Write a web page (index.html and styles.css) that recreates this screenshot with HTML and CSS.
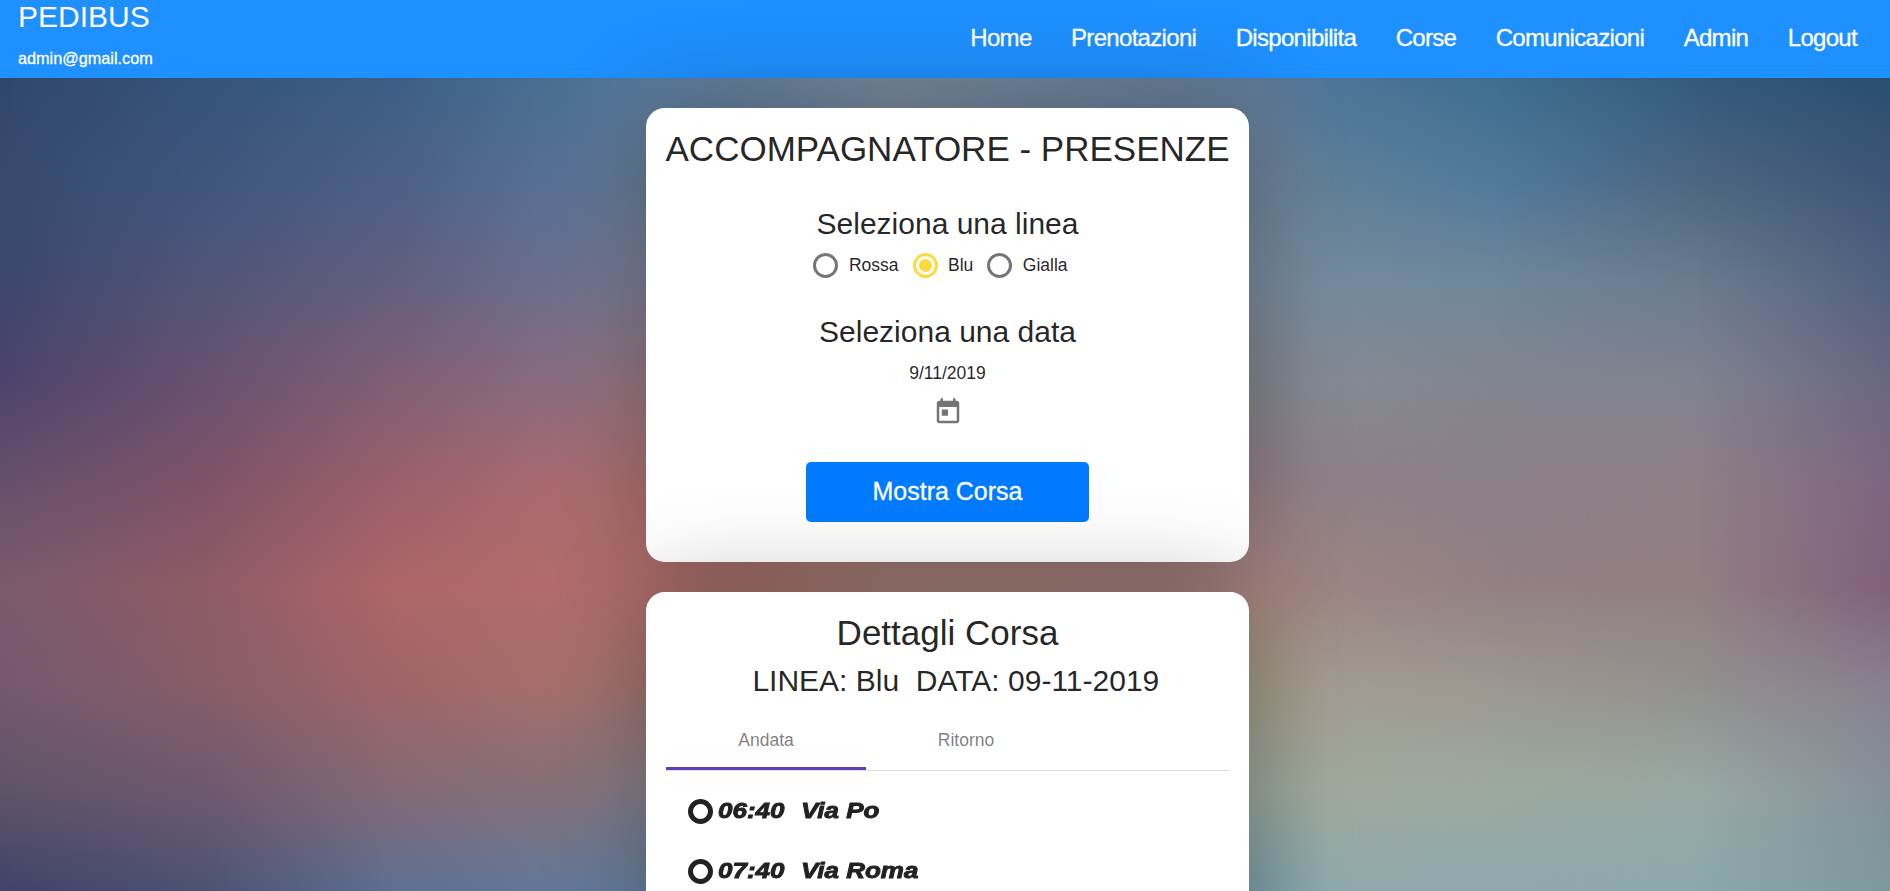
FILE: index.html
```html
<!DOCTYPE html>
<html lang="it">
<head>
<meta charset="utf-8">
<title>Pedibus</title>
<link rel="stylesheet" href="styles.css">
</head>
<body>
<div class="page">
  <div class="backdrop" aria-hidden="true">
    <div class="band b0"></div><div class="band b1"></div><div class="band b2"></div>
    <div class="band b3"></div><div class="band b4"></div><div class="band b5"></div>
    <div class="band b6"></div><div class="band b7"></div><div class="band b8"></div>
    <div class="band b9"></div><div class="band b10"></div>
  </div>
  <div class="app">
    <header class="topbar">
      <div class="brand">
        <div class="brand-name">PEDIBUS</div>
        <div class="brand-user">admin@gmail.com</div>
      </div>
      <nav class="menu">
        <a>Home</a><a>Prenotazioni</a><a>Disponibilita</a><a>Corse</a><a>Comunicazioni</a><a>Admin</a><a>Logout</a>
      </nav>
    </header>
    <main class="content">
      <section class="card picker">
        <h1 class="title">ACCOMPAGNATORE - PRESENZE</h1>
        <h2 class="subtitle">Seleziona una linea</h2>
        <div class="radios">
          <label class="radio"><span class="ring"></span>Rossa</label>
          <label class="radio"><span class="ring checked"></span>Blu</label>
          <label class="radio"><span class="ring"></span>Gialla</label>
        </div>
        <h2 class="subtitle date-title">Seleziona una data</h2>
        <div class="date">9/11/2019</div>
        <svg class="calendar" viewBox="0 0 24 24"><path d="M19 3h-1V1h-2v2H8V1H6v2H5c-1.11 0-1.99.9-1.99 2L3 19c0 1.1.89 2 2 2h14c1.1 0 2-.9 2-2V5c0-1.1-.9-2-2-2zm0 16H5V8h14v11zM7 10h5v5H7z"/></svg>
        <button class="submit">Mostra Corsa</button>
      </section>
      <section class="card details">
        <h1 class="title">Dettagli Corsa</h1>
        <h2 class="subtitle run-info">&nbsp;&nbsp;LINEA: Blu&nbsp; DATA: 09-11-2019</h2>
        <div class="tabs">
          <div class="tab active">Andata</div>
          <div class="tab">Ritorno</div>
        </div>
        <ul class="stops">
          <li class="stop"><span class="dot"></span><span class="time"><span class="wide">06:40</span></span><span class="wide">Via Po</span></li>
          <li class="stop"><span class="dot"></span><span class="time"><span class="wide">07:40</span></span><span class="wide">Via Roma</span></li>
        </ul>
      </section>
    </main>
  </div>
</div>
</body>
</html>
```
FILE: styles.css
```css
* { box-sizing: border-box; }
html, body { margin: 0; height: 100%; overflow: hidden; }
body {
  font-family: "Liberation Sans", Arial, sans-serif;
  font-size: 17.5px;
  color: rgba(0, 0, 0, .87);
}
h1, h2, ul { margin: 0; padding: 0; font-weight: 400; }

.page { display: grid; grid-template: 100vh / 100%; overflow: hidden; }
.backdrop, .app { grid-area: 1 / 1; min-height: 0; }

/* Colour mesh: vertical gradients cross-faded from left to right */
.backdrop { display: grid; padding-top: 78px; isolation: isolate; }
.band {
  grid-area: 1 / 1;
  background: linear-gradient(var(--c));
  -webkit-mask-image: linear-gradient(to right, transparent var(--from), #000 var(--to));
  mask-image: linear-gradient(to right, transparent var(--from), #000 var(--to));
}
.b0 { -webkit-mask-image: none; mask-image: none; --c: #32466b, #364a6c, #3c476c, #4d436d, #67506c, #7b5a6c, #755870, #5f5468, #40436a; }
.b1 { --from: 0px; --to: 200px; --c: #34537b, #3f557d, #505577, #695070, #7e5268, #8e5b66, #865d68, #6e5870, #4c5272; }
.b2 { --from: 200px; --to: 400px; --c: #3d5f87, #4c6086, #625f80, #815f75, #9c606a, #ae6668, #a06568, #836a75, #5f7093; }
.b3 { --from: 400px; --to: 560px; --c: #4a7093, #587195, #6c708f, #8a6c80, #aa6b70, #b26c6b, #a56f6c, #847078, #627898; }
.b4 { --from: 560px; --to: 660px; --c: #5a7c9e, #687e98, #7c7e94, #9a7880, #ae7270, #b0706c, #a07570, #84808a, #6580a0; }
.b5 { --from: 660px; --to: 900px; --c: #76889c, #808a9c, #8a8890, #a08884, #a87c78, #ac847c, #a08880, #909090, #7890a0; }
.b6 { --from: 900px; --to: 1260px; --c: #5f7a98, #6d8299, #78899a, #82868f, #948088, #a88480, #a09a85, #98a598, #7ea0ab; }
.b7 { --from: 1260px; --to: 1330px; --c: #4d7499, #5f8098, #748a9e, #858a94, #8f8088, #9c8582, #a39c92, #a0aa9c, #8faaae; }
.b8 { --from: 1330px; --to: 1500px; --c: #3d6e90, #50789a, #6f869a, #82858f, #8c8088, #938085, #9c9890, #9caa9f, #90a8ae; }
.b9 { --from: 1500px; --to: 1700px; --c: #34597b, #4b6580, #6a7a8e, #808290, #8f7e85, #927e83, #92908f, #98a8a3, #8ca8ac; }
.b10 { --from: 1700px; --to: 1890px; --c: #2a4e6e, #3e5575, #50607f, #6a6680, #7d6580, #80607a, #88808e, #849098, #7d989e; }

.app { display: flex; flex-direction: column; overflow: hidden; z-index: 1; }
.topbar {
  flex: none;
  height: 78px;
  display: flex;
  justify-content: space-between;
  align-items: center;
  padding: 0 33px 2px 18px;
  background: #1e90ff;
  color: #fff;
}
.brand { align-self: flex-start; }
.brand-name { font-size: 30px; line-height: 34px; }
.brand-user { font-size: 16.25px; line-height: 20px; margin-top: 14px; }
.menu { display: flex; gap: 39.5px; font-size: 24px; letter-spacing: -.69px; line-height: 30px; }
.brand-user, .menu, .submit { -webkit-text-stroke: .3px currentColor; }

.content {
  flex: none;
  display: flex;
  flex-direction: column;
  align-items: center;
  gap: 30px;
  padding: 30px 0 0 5px;
}
.card {
  width: 603px;
  padding: 21px 20px 20px;
  border-radius: 18.75px;
  background: #fff;
  box-shadow: 0 0 100px rgba(0, 0, 0, .3);
  display: flex;
  flex-direction: column;
  align-items: center;
}
.picker { height: 454px; }
.details { height: 380px; }
.title { font-size: 35px; line-height: 40px; white-space: nowrap; }
.subtitle { font-size: 30px; line-height: 40px; white-space: nowrap; }
.picker .subtitle { margin-top: 35px; }
.picker .date-title { margin-top: 34px; }

.radios { display: flex; margin-top: 9px; height: 25px; }
.radio { display: flex; align-items: center; gap: 10.5px; margin-right: 14px; }
.ring {
  width: 25px; height: 25px;
  border: 3px solid #757575;
  border-radius: 50%;
  display: grid;
  place-items: center;
}
.checked { border-color: #ffd740; }
.checked::after { content: ""; width: 13px; height: 13px; border-radius: 50%; background: #ffd740; }

.date { line-height: 20px; margin-top: 11px; }
.calendar { width: 30px; height: 30px; margin-top: 14px; fill: #757575; }
.submit {
  width: 283px; height: 60px;
  margin-top: 35px;
  padding-bottom: 3px;
  border: 0;
  border-radius: 5px;
  background: #007bff;
  color: #fff;
  font: 25px "Liberation Sans", Arial, sans-serif;
}

.run-info { margin-top: 8px; }
.tabs { display: flex; align-self: stretch; margin-top: 9px; border-bottom: 1px solid #dfdfdf; }
.tab {
  width: 200px; height: 60px;
  display: grid;
  place-items: center;
  color: rgba(0, 0, 0, .52);
  border-bottom: 3px solid transparent;
  padding-top: 3px;
}
.active { border-bottom-color: #673ab7; }

.stops { align-self: stretch; list-style: none; margin-top: 10px; padding-left: 22px; }
.stop {
  height: 60px;
  display: flex;
  align-items: center;
  font: italic bold 22px "Liberation Sans", Arial, sans-serif;
}
.dot { width: 25px; height: 25px; border: 5px solid #222; border-radius: 50%; }
.time { margin-left: 5px; width: 83px; }
.wide {
  display: inline-block;
  transform: scaleX(1.18);
  transform-origin: left;
  -webkit-text-stroke: .9px #222;
}
```
